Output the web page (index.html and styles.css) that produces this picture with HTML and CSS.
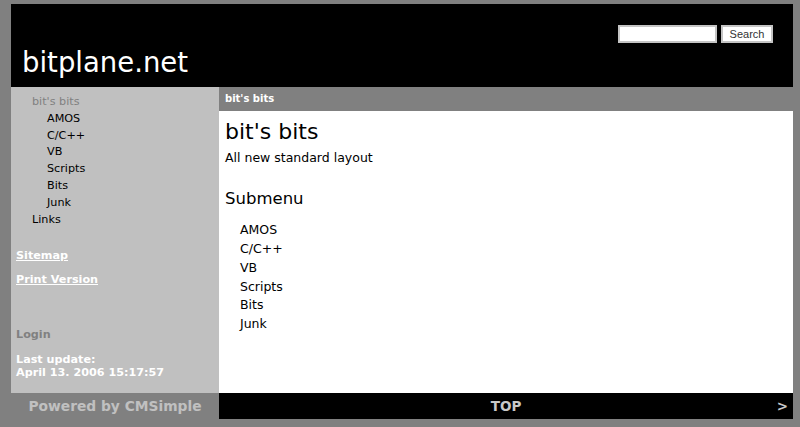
FILE: index.html
```html
<!DOCTYPE html>
<html>
<head>
<meta charset="utf-8">
<title>bitplane.net</title>
<link rel="stylesheet" href="styles.css">
</head>
<body>
<div class="page">
  <header class="header">
    <div class="logo">bitplane.net</div>
    <form class="search">
      <input class="search-input" type="text">
      <button class="search-btn" type="button">Search</button>
    </form>
  </header>
  <div class="main">
    <aside class="sidebar">
      <ul class="menu">
        <li class="current">bit's bits
          <ul class="submenu">
            <li>AMOS</li>
            <li>C/C++</li>
            <li>VB</li>
            <li>Scripts</li>
            <li>Bits</li>
            <li>Junk</li>
          </ul>
        </li>
        <li>Links</li>
      </ul>
      <a class="side-link first" href="#">Sitemap</a>
      <a class="side-link" href="#">Print Version</a>
      <div class="login">Login</div>
      <div class="update">Last update:<br>April 13. 2006 15:17:57</div>
    </aside>
    <section class="content">
      <div class="crumb">bit's bits</div>
      <div class="body">
        <h1 class="title">bit's bits</h1>
        <p class="intro">All new standard layout</p>
        <h2 class="subhead">Submenu</h2>
        <ul class="sublist">
          <li>AMOS</li>
          <li>C/C++</li>
          <li>VB</li>
          <li>Scripts</li>
          <li>Bits</li>
          <li>Junk</li>
        </ul>
      </div>
    </section>
  </div>
  <footer class="footer">
    <div class="powered">Powered by CMSimple</div>
    <div class="footbar">
      <span class="top">TOP</span>
      <span class="next">&gt;</span>
    </div>
  </footer>
</div>
</body>
</html>
```

FILE: styles.css
```css
html, body {
  margin: 0;
  padding: 0;
}
body {
  background: #808080;
  font-family: "DejaVu Sans", Verdana, sans-serif;
  height: 427px;
  overflow: hidden;
}
.page {
  margin: 4px 7px 0 11px;
  width: 782px;
}
.header {
  background: #000;
  height: 83px;
  display: flex;
  justify-content: space-between;
  align-items: flex-start;
}
.logo {
  color: #fff;
  font-size: 27.5px;
  line-height: 32px;
  padding: 42px 0 0 11px;
}
.search {
  display: flex;
  gap: 4px;
  margin: 21px 20px 0 0;
}
.search-input {
  box-sizing: border-box;
  width: 99px;
  height: 18px;
  border: 2px solid #c4c4c4;
  background: #fff;
  padding: 0;
  margin: 0;
}
.search-btn {
  box-sizing: border-box;
  width: 52px;
  height: 18px;
  border: 2px solid #c4c4c4;
  background: #fff;
  color: #333;
  font-family: "Liberation Sans", Arial, sans-serif;
  font-size: 11px;
  padding: 0;
  margin: 0;
  line-height: 14px;
}
.main {
  display: flex;
  height: 306px;
}
.sidebar {
  width: 208px;
  background: #c0c0c0;
  font-size: 11.2px;
  display: flex;
  flex-direction: column;
  align-items: flex-start;
}
.menu, .submenu, .sublist {
  list-style: none;
  margin: 0;
  padding: 0;
}
.menu {
  margin-top: 7px;
  padding-left: 21px;
  line-height: 16.8px;
  color: #000;
}
.menu .current {
  color: #808080;
}
.submenu {
  padding-left: 15px;
  color: #000;
}
.side-link {
  color: #fff;
  font-weight: bold;
  text-decoration: underline;
  line-height: 16.8px;
  margin: 7px 0 0 5px;
}
.side-link.first {
  margin-top: 20px;
}
.login {
  color: #808080;
  font-weight: bold;
  line-height: 16.8px;
  margin: 38px 0 0 5px;
}
.update {
  color: #fff;
  font-weight: bold;
  line-height: 13px;
  margin: 9px 0 0 5px;
}
.content {
  flex: 1;
  background: #fff;
  display: flex;
  flex-direction: column;
}
.crumb {
  background: #808080;
  color: #fff;
  font-weight: bold;
  font-size: 10px;
  height: 24px;
  line-height: 24px;
  padding-left: 6px;
}
.body {
  padding-left: 6px;
}
.title {
  font-size: 22px;
  font-weight: normal;
  line-height: normal;
  margin: 8px 0 0;
  color: #000;
}
.intro {
  font-size: 12.5px;
  line-height: 18.75px;
  margin: 5px 0 0;
}
.subhead {
  font-size: 16.5px;
  font-weight: normal;
  line-height: normal;
  margin: 21px 0 0;
}
.sublist {
  margin-top: 13.5px;
  padding-left: 15px;
  font-size: 12.5px;
  line-height: 18.75px;
}
.footer {
  display: flex;
  height: 26px;
}
.powered {
  width: 208px;
  text-align: center;
  color: #c0c0c0;
  font-weight: bold;
  font-size: 13.8px;
  line-height: 26px;
}
.footbar {
  flex: 1;
  background: #000;
  color: #c8c8c8;
  font-weight: bold;
  font-size: 13.5px;
  line-height: 26px;
  display: flex;
  justify-content: center;
  position: relative;
}
.next {
  position: absolute;
  right: 5px;
  top: 0;
}
```
